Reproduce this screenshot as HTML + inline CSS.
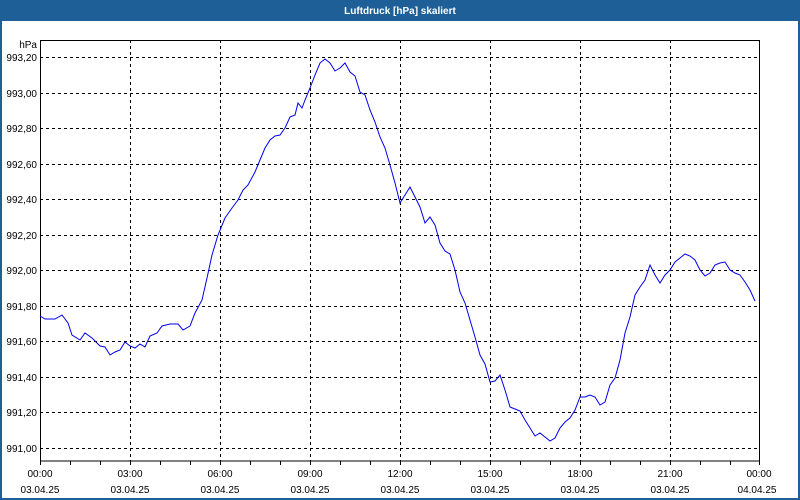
<!DOCTYPE html>
<html><head><meta charset="utf-8"><style>
html,body{margin:0;padding:0;width:800px;height:500px;overflow:hidden;background:#fff}
</style></head><body>
<svg width="800" height="500" xmlns="http://www.w3.org/2000/svg" font-family="'Liberation Sans', sans-serif" font-size="10">
<rect x="0" y="0" width="800" height="500" fill="#fff"/>
<rect x="0" y="0" width="800" height="21" fill="#1e5f98"/>
<rect x="0" y="0" width="2" height="500" fill="#1e5f98"/>
<rect x="798" y="0" width="2" height="500" fill="#1e5f98"/>
<rect x="0" y="498" width="800" height="2" fill="#1e5f98"/>
<text x="400" y="14" fill="#fff" font-weight="bold" text-anchor="middle">Luftdruck [hPa] skaliert</text>
<g stroke="#000" stroke-width="1" stroke-dasharray="3,3" shape-rendering="crispEdges">
<line x1="40" y1="57.5" x2="760" y2="57.5"/><line x1="40" y1="93.5" x2="760" y2="93.5"/>
<line x1="40" y1="128.5" x2="760" y2="128.5"/><line x1="40" y1="164.5" x2="760" y2="164.5"/>
<line x1="40" y1="199.5" x2="760" y2="199.5"/><line x1="40" y1="235.5" x2="760" y2="235.5"/>
<line x1="40" y1="270.5" x2="760" y2="270.5"/><line x1="40" y1="306.5" x2="760" y2="306.5"/>
<line x1="40" y1="341.5" x2="760" y2="341.5"/><line x1="40" y1="377.5" x2="760" y2="377.5"/>
<line x1="40" y1="412.5" x2="760" y2="412.5"/><line x1="40" y1="448.5" x2="760" y2="448.5"/>
<line x1="130.5" y1="40" x2="130.5" y2="461"/><line x1="220.5" y1="40" x2="220.5" y2="461"/>
<line x1="310.5" y1="40" x2="310.5" y2="461"/><line x1="400.5" y1="40" x2="400.5" y2="461"/>
<line x1="490.5" y1="40" x2="490.5" y2="461"/><line x1="580.5" y1="40" x2="580.5" y2="461"/>
<line x1="670.5" y1="40" x2="670.5" y2="461"/>
</g>
<rect x="40.5" y="40.5" width="719" height="420.5" fill="none" stroke="#000" shape-rendering="crispEdges"/>
<g stroke="#000" shape-rendering="crispEdges">
<path d="M40.5 461v4M70.5 461v4M100.5 461v4M130.5 461v4M160.5 461v4M190.5 461v4M220.5 461v4M250.5 461v4M280.5 461v4M310.5 461v4M340.5 461v4M370.5 461v4M400.5 461v4M430.5 461v4M460.5 461v4M490.5 461v4M520.5 461v4M550.5 461v4M580.5 461v4M610.5 461v4M640.5 461v4M670.5 461v4M700.5 461v4M730.5 461v4M759.5 461v4"/>
</g>
<polyline fill="none" stroke="#0000ee" stroke-width="1" points="40,316 45,319 55,319 62,315 68,323 72,335 80,340 85,333 92,338 100,346 105,347 110,355 115,352 120,350 125,342 130,346 135,348 140,344 145,347 150,336 157,333 162,326 170,324 178,324 183,330 190,326 195,313 202,300 207,278 212,255 218,235 225,218 232,208 238,200 243,190 248,185 255,172 260,160 265,148 270,140 275,136 280,135 285,128 290,117 295,115 298,103 302,108 305,100 310,88 315,75 320,63 325,59 330,63 335,71 340,68 345,63 350,72 355,76 360,92 365,95 370,110 375,122 380,137 385,148 390,165 395,183 400,203 405,195 410,187 415,197 420,207 425,223 430,217 435,225 440,243 445,251 450,254 455,270 460,292 465,303 470,320 475,337 480,355 485,364 490,382 495,381 500,375 505,390 510,407 515,409 520,411 525,420 530,428 535,436 540,433 545,437 550,441 555,438 560,428 565,422 570,418 575,410 580,397 585,397 590,395 595,397 600,405 605,402 610,385 615,378 620,360 625,333 630,317 635,295 640,287 645,280 650,265 655,275 660,283 665,275 670,270 675,262 680,258 685,254 690,256 695,260 700,270 705,276 710,273 715,265 720,263 725,262 730,270 735,273 740,275 745,282 750,290 755,301"/>
<g fill="#000" text-anchor="end">
<text x="37" y="48">hPa</text>
<text x="37" y="61">993,20</text><text x="37" y="97">993,00</text>
<text x="37" y="132">992,80</text><text x="37" y="168">992,60</text>
<text x="37" y="203">992,40</text><text x="37" y="239">992,20</text>
<text x="37" y="274">992,00</text><text x="37" y="310">991,80</text>
<text x="37" y="345">991,60</text><text x="37" y="381">991,40</text>
<text x="37" y="416">991,20</text><text x="37" y="452">991,00</text>
</g>
<g fill="#000" text-anchor="middle">
<text x="40" y="477">00:00</text><text x="40" y="493">03.04.25</text>
<text x="130" y="477">03:00</text><text x="130" y="493">03.04.25</text>
<text x="220" y="477">06:00</text><text x="220" y="493">03.04.25</text>
<text x="310" y="477">09:00</text><text x="310" y="493">03.04.25</text>
<text x="400" y="477">12:00</text><text x="400" y="493">03.04.25</text>
<text x="490" y="477">15:00</text><text x="490" y="493">03.04.25</text>
<text x="580" y="477">18:00</text><text x="580" y="493">03.04.25</text>
<text x="670" y="477">21:00</text><text x="670" y="493">03.04.25</text>
<text x="759" y="477">00:00</text><text x="757" y="493">04.04.25</text>
</g>
</svg>
</body></html>
